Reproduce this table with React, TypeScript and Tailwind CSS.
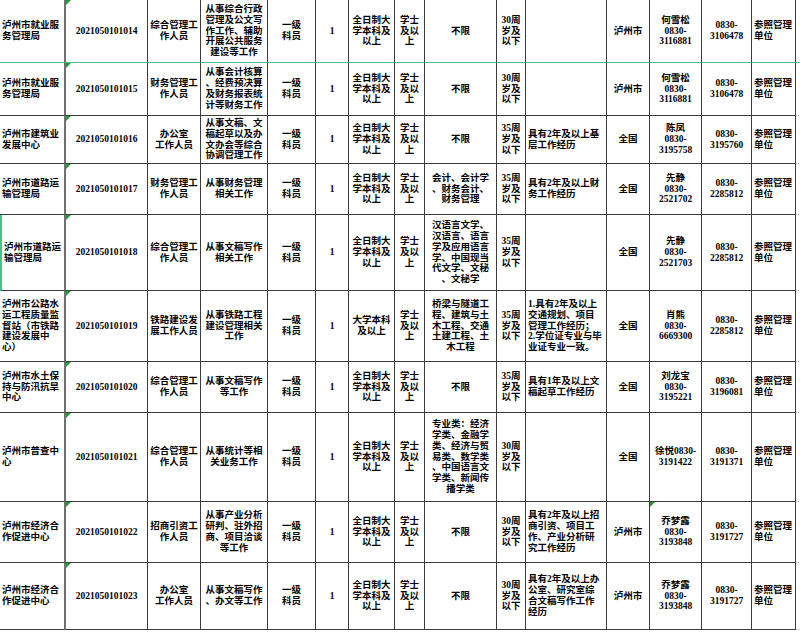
import React from "react";

type Row = { h: string; cells: string[] };

const std = {
  c5: "一级\n科员",
  c6: "1",
  c7: "全日制大\n学本科及\n以上",
  c8: "学士\n及以\n上",
  c15: "参照管理\n单位",
};

const rows: Row[] = [
  {
    h: "63",
    cells: ["泸州市就业服\n务管理局", "2021050101014", "综合管理工\n作人员", "从事综合行政\n管理及公文写\n作工作、辅助\n开展公共服务\n建设等工作", std.c5, std.c6, std.c7, std.c8, "不限", "30周\n岁及\n以下", "", "泸州市", "何雪松\n0830-\n3116881", "0830-\n3106478", std.c15],
  },
  {
    h: "53",
    cells: ["泸州市就业服\n务管理局", "2021050101015", "财务管理工\n作人员", "从事会计核算\n、经费预决算\n及财务报表统\n计等财务工作", std.c5, std.c6, std.c7, std.c8, "不限", "30周\n岁及\n以下", "", "泸州市", "何雪松\n0830-\n3116881", "0830-\n3106478", std.c15],
  },
  {
    h: "48",
    cells: ["泸州市建筑业\n发展中心", "2021050101016", "办公室\n工作人员", "从事文稿、文\n稿起草以及办\n文办会等综合\n协调管理工作", std.c5, std.c6, std.c7, std.c8, "不限", "35周\n岁及\n以下", "具有2年及以上基\n层工作经历", "全国", "陈凤\n0830-\n3195758", "0830-\n3195760", std.c15],
  },
  {
    h: "51",
    cells: ["泸州市道路运\n输管理局", "2021050101017", "财务管理工\n作人员", "从事财务管理\n相关工作", std.c5, std.c6, std.c7, std.c8, "会计、会计学\n、财务会计、\n财务管理", "35周\n岁及\n以下", "具有2年及以上财\n务工作经历", "全国", "先静\n0830-\n2521702", "0830-\n2285812", std.c15],
  },
  {
    h: "76",
    cells: ["泸州市道路运\n输管理局", "2021050101018", "综合管理工\n作人员", "从事文稿写作\n相关工作", std.c5, std.c6, std.c7, std.c8, "汉语言文学、\n汉语言、语言\n学及应用语言\n学、中国现当\n代文学、文秘\n、文秘学", "35周\n岁及\n以下", "", "全国", "先静\n0830-\n2521703", "0830-\n2285812", std.c15],
  },
  {
    h: "71",
    cells: ["泸州市公路水\n运工程质量监\n督站（市铁路\n建设发展中\n心）", "2021050101019", "铁路建设发\n展工作人员", "从事铁路工程\n建设管理相关\n工作", std.c5, std.c6, "大学本科\n及以上", std.c8, "桥梁与隧道工\n程、建筑与土\n木工程、交通\n土建工程、土\n木工程", "35周\n岁及\n以下", "1.具有2年及以上\n交通规划、项目\n管理工作经历；\n2.学位证专业与毕\n业证专业一致。", "全国", "肖熊\n0830-\n6669300", "0830-\n2285812", std.c15],
  },
  {
    h: "51",
    cells: ["泸州市水土保\n持与防汛抗旱\n中心", "2021050101020", "综合管理工\n作人员", "从事文稿写作\n等工作", std.c5, std.c6, std.c7, std.c8, "不限", "35周\n岁及\n以下", "具有1年及以上文\n稿起草工作经历", "全国", "刘龙宝\n0830-\n3195221", "0830-\n3196081", std.c15],
  },
  {
    h: "89",
    cells: ["泸州市普查中\n心", "2021050101021", "综合管理工\n作人员", "从事统计等相\n关业务工作", std.c5, std.c6, std.c7, std.c8, "专业类：经济\n学类、金融学\n类、经济与贸\n易类、数学类\n、中国语言文\n学类、新闻传\n播学类", "30周\n岁及\n以下", "", "全国", "徐悦0830-\n3191422", "0830-\n3191371", std.c15],
  },
  {
    h: "61",
    cells: ["泸州市经济合\n作促进中心", "2021050101022", "招商引资工\n作人员", "从事产业分析\n研判、驻外招\n商、项目洽谈\n等工作", std.c5, std.c6, std.c7, std.c8, "不限", "30周\n岁及\n以下", "具有2年及以上招\n商引资、项目工\n作、产业分析研\n究工作经历", "泸州市", "乔梦露\n0830-\n3193848", "0830-\n3191727", std.c15],
  },
  {
    h: "67",
    cells: ["泸州市经济合\n作促进中心", "2021050101023", "办公室\n工作人员", "从事文稿写作\n、办文等工作", std.c5, std.c6, std.c7, std.c8, "不限", "30周\n岁及\n以下", "具有2年及以上办\n公室、研究室综\n合文稿写作工作\n经历", "泸州市", "乔梦露\n0830-\n3193848", "0830-\n3191727", std.c15],
  },
];

const leftCols = [0, 10, 14];

function Tri() {
  return <div className="absolute top-0 left-0 w-0 h-0 border-t-[5px] border-t-[#1f9d2f] border-r-[5px] border-r-transparent" />;
}

function Cell({ text, col, row }: { text: string; col: number; row: number }) {
  const left = leftCols.includes(col);
  const lines = text.split("\n");
  return (
    <div
      className={[
        "relative flex items-center border-b whitespace-nowrap px-[2px]",
        col === 0 ? "border-r-2 border-r-[#707070]" : "border-r border-r-[#3c3c3c]",
        row === 0 ? "border-b-[#4cbb84]" : "border-b-[#3c3c3c]",
        row === 4 && col === 0 ? "border-l-2 border-l-[#3fc48a]" : "",
        left ? "justify-start text-left" : "justify-center text-center",
      ].join(" ")}
    >
      {(col === 1 || (col === 12 && row === 8)) && <Tri />}
      <div>
        {lines.map((l, i) => (
          <div key={i}>{l || "\u00a0"}</div>
        ))}
      </div>
    </div>
  );
}

export default function App() {
  return (
    <div className="w-[800px] h-[633px] overflow-hidden bg-white text-black font-bold text-[9.5px] leading-[10.8px] font-['Liberation_Serif','Noto_Sans_CJK_SC',serif]">
      <div className="grid grid-cols-[66px_82px_53px_67px_48px_33px_46px_30px_72px_29px_81px_43px_52px_50px_44px_1fr] grid-rows-[63px_53px_48px_51px_76px_71px_51px_89px_61px_67px]">
        {rows.map((r, ri) => (
          <React.Fragment key={ri}>
            {r.cells.map((c, ci) => (
              <Cell key={ci} text={c} col={ci} row={ri} />
            ))}
            <div className={ri === 0 ? "border-b border-b-[#4cbb84]" : "border-b border-b-[#d6d6d6]"} />
          </React.Fragment>
        ))}
      </div>
    </div>
  );
}
